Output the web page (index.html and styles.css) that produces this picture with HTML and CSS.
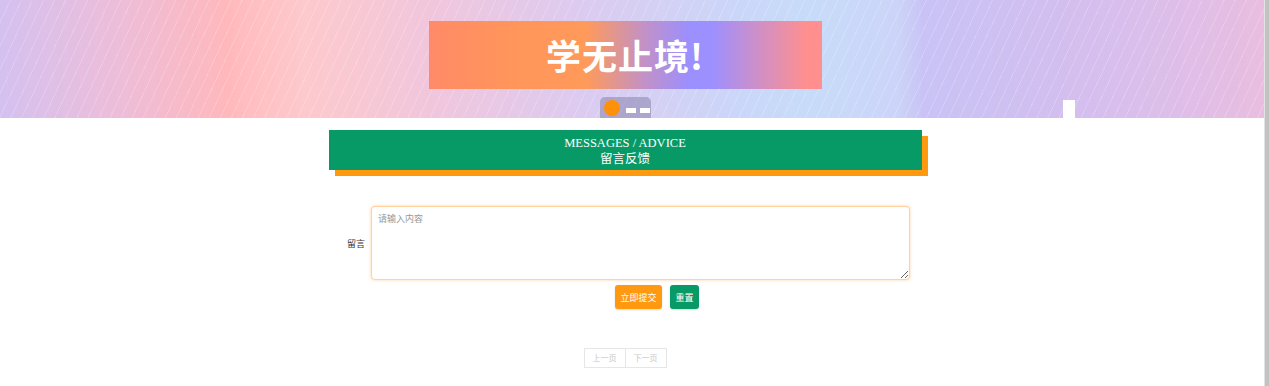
FILE: index.html
```html
<!DOCTYPE html>
<html lang="zh-CN">
<head>
    <meta charset="UTF-8">
    <meta name="viewport" content="width=device-width, initial-scale=1.0">
    <title>留言反馈</title>
    <link rel="stylesheet" href="styles.css">
</head>
<body>
    <div class="screen">
        <div class="page">
            <div class="banner">
                <div class="slogan">学无止境!</div>
                <div class="dots">
                    <span class="dot active"></span>
                    <span class="dot"></span>
                    <span class="dot"></span>
                </div>
                <span class="tab"></span>
            </div>

            <div class="main">
                <div class="section-title">
                    <div class="en">MESSAGES / ADVICE</div>
                    <div class="cn">留言反馈</div>
                </div>

                <form class="form">
                    <div class="form-row">
                        <label class="form-label">留言</label>
                        <textarea class="form-input" placeholder="请输入内容"></textarea>
                    </div>
                    <div class="actions">
                        <button type="button" class="btn btn-submit">立即提交</button>
                        <button type="reset" class="btn btn-reset">重置</button>
                    </div>
                </form>

                <div class="pager">
                    <a href="#">上一页</a>
                    <a href="#">下一页</a>
                </div>
            </div>
        </div>
        <div class="scrollbar"></div>
    </div>
</body>
</html>
```

FILE: styles.css
```css
body {
    margin: 0;
    padding: 0;
    font-family: "Noto Sans CJK SC", "Noto Sans", sans-serif;
    background-color: #fff;
    color: #333;
}

.screen {
    display: flex;
    height: 386px;
    overflow: hidden;
}

.page {
    flex: 1;
}

.scrollbar {
    width: 4px;
    background-color: #c2c2c2;
    border-left: 1px solid #e2e2e2;
}

.banner {
    position: relative;
    height: 118px;
    display: flex;
    flex-direction: column;
    align-items: center;
    padding-right: 14px;
    background-image:
        repeating-linear-gradient(115deg, rgba(255, 255, 255, 0) 0, rgba(255, 255, 255, 0) 9px, rgba(255, 255, 255, 0.18) 9px, rgba(255, 255, 255, 0.18) 10px),
        linear-gradient(90deg, #d4c1f0 0%, #ecbdda 9%, #ffb8bc 18%, #ffbfc2 20%, #fdc9cc 24%, #f1c6dc 34%, #dccbf0 46%, #cbd6f8 58%, #c7dcf9 64%, #ccd4f8 71%, #c9c3f5 73%, #d0bff0 82%, #dcbeea 92%, #e9bddf 100%);
}

.slogan {
    margin-top: 21px;
    width: 393px;
    height: 68px;
    line-height: 68px;
    text-align: center;
    font-size: 35px;
    font-weight: bold;
    color: #fff;
    letter-spacing: 1px;
    background: linear-gradient(90deg, #ff8a68 0%, #ff955b 20%, #ff9a5a 40%, #c191c8 55%, #9c8ffe 66%, #9c90ff 72%, #d08fc6 84%, #ff8f8f 96%, #ff9090 100%);
}

.dots {
    margin-top: 8px;
    width: 51px;
    height: 21px;
    border-radius: 5px 5px 0 0;
    background-color: rgba(120, 115, 160, 0.45);
    display: flex;
    align-items: center;
    padding-left: 3px;
    box-sizing: border-box;
}

.dot {
    width: 10px;
    height: 5px;
    margin-left: 4px;
    margin-top: 6px;
    background-color: #fff;
}

.dot.active {
    width: 16px;
    height: 16px;
    margin: 0 2px 0 1px;
    border-radius: 50%;
    background-color: #ff900a;
}

.tab {
    position: absolute;
    left: 1063px;
    bottom: 0;
    width: 12px;
    height: 18px;
    background-color: #fff;
}

.main {
    width: 1250px;
}

.section-title {
    width: 593px;
    height: 40px;
    margin: 12px auto 0;
    box-sizing: border-box;
    padding-top: 6px;
    background-color: #079a67;
    box-shadow: 6px 6px 0 #ff9a10;
    color: #fff;
    text-align: center;
}

.section-title .en {
    font-family: "Liberation Serif", serif;
    font-size: 12.5px;
    line-height: 14px;
}

.section-title .cn {
    font-size: 12.5px;
    line-height: 15px;
}

.form {
    width: 580px;
    margin: 36px auto 0;
}

.form-row {
    display: flex;
    align-items: center;
}

.form-label {
    width: 30px;
    text-align: right;
    margin-right: 6px;
    font-size: 9px;
    color: #333;
}

.form-input {
    width: 539px;
    height: 74px;
    box-sizing: border-box;
    padding: 5px 6px;
    border: 1px solid #ffd2a0;
    border-radius: 4px;
    box-shadow: 0 0 3px rgba(255, 160, 60, 0.5);
    font-family: "Noto Sans CJK SC", sans-serif;
    font-size: 9px;
    resize: vertical;
    outline: none;
}

.form-input::placeholder {
    color: #999;
}

.actions {
    display: flex;
    gap: 8px;
    margin: 5px 0 0 280px;
}

.btn {
    height: 24px;
    padding: 0;
    border: none;
    border-radius: 3px;
    color: #fff;
    font-family: "Noto Sans CJK SC", sans-serif;
    font-size: 9px;
    white-space: nowrap;
    box-shadow: 0 1px 2px rgba(0, 0, 0, 0.15);
}

.btn-submit {
    width: 47px;
    background-color: #ff9a10;
}

.btn-reset {
    width: 29px;
    background-color: #079a67;
}

.pager {
    display: flex;
    justify-content: center;
    margin-top: 39px;
}

.pager a {
    width: 40px;
    height: 18px;
    line-height: 18px;
    text-align: center;
    border: 1px solid #e6e6e6;
    font-size: 8px;
    color: #c8c8c8;
    text-decoration: none;
}

.pager a + a {
    border-left: none;
}
```
